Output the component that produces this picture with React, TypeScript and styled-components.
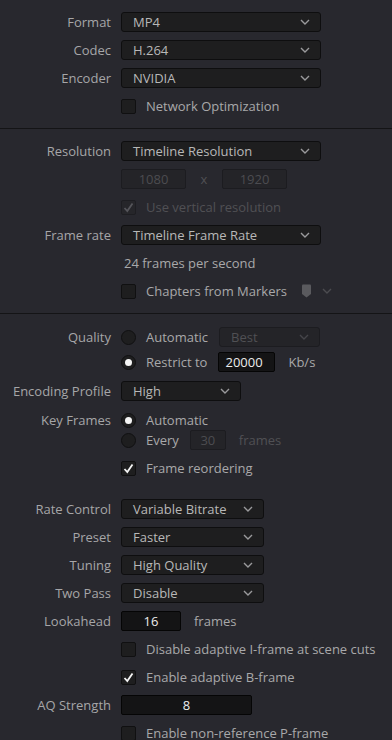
import React from 'react'
import styled, { createGlobalStyle } from 'styled-components'

const GlobalStyle = createGlobalStyle`
  html, body {
    margin: 0;
    padding: 0;
    background: #28282e;
  }
  body {
    font-family: 'Open Sans', 'DejaVu Sans', sans-serif;
    font-size: 13px;
    color: #b4b4b4;
  }
`

const Page = styled.div`
  width: 392px;
  height: 740px;
  overflow: hidden;
  background: #28282e;
`

const Section = styled.div<{ pt?: number; pb?: number }>`
  display: flex;
  flex-direction: column;
  padding-top: ${({ pt }) => pt ?? 12}px;
  padding-bottom: ${({ pb }) => pb ?? 12}px;
`

const Divider = styled.div`
  height: 1px;
  background: #141416;
`

const Row = styled.div<{ mt?: number }>`
  display: grid;
  grid-template-columns: 111px 1fr;
  column-gap: 10px;
  align-items: center;
  height: 20px;
  margin-top: ${({ mt }) => mt ?? 0}px;
`

const Label = styled.div`
  text-align: right;
  color: #a6a6a8;
  white-space: nowrap;
  margin-top: -1px;
`

const Controls = styled.div`
  display: flex;
  align-items: center;
  min-width: 0;
`

const Select = styled.div<{ w: number; disabled?: boolean }>`
  box-sizing: border-box;
  width: ${({ w }) => w}px;
  height: 20px;
  display: flex;
  align-items: center;
  justify-content: space-between;
  padding: 0 10px 0 11px;
  background: ${({ disabled }) => (disabled ? '#242428' : '#1e1e1f')};
  border: 1px solid ${({ disabled }) => (disabled ? '#1c1c20' : '#0e0e0f')};
  border-radius: 3px;
  color: ${({ disabled }) => (disabled ? '#505054' : '#b8b8b8')};
  white-space: nowrap;
`

const Chevron = ({ color = '#9a9a9c' }: { color?: string }) => (
  <svg width="10" height="6" viewBox="0 0 10 6">
    <path d="M1 1 L5 5 L9 1" fill="none" stroke={color} strokeWidth="1.4" />
  </svg>
)

const Field = styled.div<{ w: number; disabled?: boolean; align?: string }>`
  box-sizing: border-box;
  width: ${({ w }) => w}px;
  height: 20px;
  display: flex;
  align-items: center;
  justify-content: ${({ align }) => align || 'center'};
  padding: 0 6px;
  background: ${({ disabled }) => (disabled ? '#242428' : '#141415')};
  border: 1px solid ${({ disabled }) => (disabled ? '#1c1c20' : '#050505')};
  border-radius: 2px;
  color: ${({ disabled }) => (disabled ? '#4c4c50' : '#ececec')};
`

const Box = styled.div<{ disabled?: boolean }>`
  box-sizing: border-box;
  width: 15px;
  height: 15px;
  flex: none;
  display: flex;
  align-items: center;
  justify-content: center;
  background: ${({ disabled }) => (disabled ? '#26262a' : '#1e1e1f')};
  border: 1px solid ${({ disabled }) => (disabled ? '#1e1e22' : '#101011')};
  border-radius: 2px;
`

const Radio = styled.div<{ on?: boolean }>`
  box-sizing: border-box;
  width: 15px;
  height: 15px;
  flex: none;
  border-radius: 50%;
  background: #1e1e1f;
  border: 1px solid #101011;
  display: flex;
  align-items: center;
  justify-content: center;
  &::after {
    content: '';
    display: ${({ on }) => (on ? 'block' : 'none')};
    width: 7px;
    height: 7px;
    border-radius: 50%;
    background: #f4f4f4;
  }
`

const Text = styled.span<{ dim?: boolean; ml?: number }>`
  margin-left: ${({ ml }) => ml ?? 10}px;
  margin-top: -1px;
  color: ${({ dim }) => (dim ? '#505054' : '#a8a8aa')};
  white-space: nowrap;
`

const Check = ({ color }: { color: string }) => (
  <svg width="11" height="11" viewBox="0 0 11 11">
    <path d="M1.5 6 L4.3 9 L9.5 1.5" fill="none" stroke={color} strokeWidth="1.8" />
  </svg>
)

const CheckRow = ({ label, checked, disabled, mt, children }: {
  label: string; checked?: boolean; disabled?: boolean; mt?: number; children?: React.ReactNode
}) => (
  <Row mt={mt}>
    <span />
    <Controls>
      <Box disabled={disabled}>{checked && <Check color={disabled ? '#55555a' : '#f4f4f4'} />}</Box>
      <Text dim={disabled}>{label}</Text>
      {children}
    </Controls>
  </Row>
)

const SelectRow = ({ label, value, w, mt }: { label: string; value: string; w: number; mt?: number }) => (
  <Row mt={mt}>
    <Label>{label}</Label>
    <Controls>
      <Select w={w}>
        <span>{value}</span>
        <Chevron />
      </Select>
    </Controls>
  </Row>
)

const Marker = () => (
  <svg width="11" height="14" viewBox="0 0 11 14" style={{ marginLeft: 14 }}>
    <path d="M1 1.5 Q1 0.5 2 0.5 L9 0.5 Q10 0.5 10 1.5 L10 10 L5.5 13.5 L1 10 Z" fill="#5a5a5e" />
  </svg>
)

const Cross = styled.span`
  width: 36px;
  text-align: center;
  color: #505054;
`

const Spacer = styled.span<{ w: number }>`
  display: inline-block;
  width: ${({ w }) => w}px;
`

export default function App() {
  return (
    <Page>
      <GlobalStyle />
      <Section pt={12} pb={12}>
        <SelectRow label="Format" value="MP4" w={200} />
        <SelectRow label="Codec" value="H.264" w={200} mt={8} />
        <SelectRow label="Encoder" value="NVIDIA" w={200} mt={8} />
        <CheckRow label="Network Optimization" mt={8} />
      </Section>
      <Divider />
      <Section pt={12} pb={12}>
        <SelectRow label="Resolution" value="Timeline Resolution" w={200} />
        <Row mt={8}>
          <span />
          <Controls>
            <Field w={65} disabled>1080</Field>
            <Cross>x</Cross>
            <Field w={65} disabled>1920</Field>
          </Controls>
        </Row>
        <CheckRow label="Use vertical resolution" checked disabled mt={8} />
        <SelectRow label="Frame rate" value="Timeline Frame Rate" w={200} mt={8} />
        <Row mt={8}>
          <span />
          <Controls>
            <Text ml={3}>24 frames per second</Text>
          </Controls>
        </Row>
        <CheckRow label="Chapters from Markers" mt={8}>
          <Marker />
          <Spacer w={10} />
          <Chevron color="#4c4c50" />
        </CheckRow>
      </Section>
      <Divider />
      <Section pt={13} pb={0}>
        <Row>
          <Label>Quality</Label>
          <Controls>
            <Radio />
            <Text>Automatic</Text>
            <Spacer w={11} />
            <Select w={101} disabled>
              <span>Best</span>
              <Chevron color="#45454a" />
            </Select>
          </Controls>
        </Row>
        <Row mt={5}>
          <span />
          <Controls>
            <Radio on />
            <Text>Restrict to</Text>
            <Spacer w={11} />
            <Field w={57} align="flex-start">20000</Field>
            <Text ml={13}>Kb/s</Text>
          </Controls>
        </Row>
        <SelectRow label="Encoding Profile" value="High" w={120} mt={9} />
        <Row mt={9}>
          <Label>Key Frames</Label>
          <Controls>
            <Radio on />
            <Text>Automatic</Text>
          </Controls>
        </Row>
        <Row>
          <span />
          <Controls>
            <Radio />
            <Text>Every</Text>
            <Spacer w={11} />
            <Field w={36} disabled>30</Field>
            <Text dim ml={13}>frames</Text>
          </Controls>
        </Row>
        <CheckRow label="Frame reordering" checked mt={8} />
        <SelectRow label="Rate Control" value="Variable Bitrate" w={143} mt={21} />
        <SelectRow label="Preset" value="Faster" w={143} mt={8} />
        <SelectRow label="Tuning" value="High Quality" w={143} mt={8} />
        <SelectRow label="Two Pass" value="Disable" w={143} mt={8} />
        <Row mt={8}>
          <Label>Lookahead</Label>
          <Controls>
            <Field w={60}>16</Field>
            <Text ml={13}>frames</Text>
          </Controls>
        </Row>
        <CheckRow label="Disable adaptive I-frame at scene cuts" mt={8} />
        <CheckRow label="Enable adaptive B-frame" checked mt={8} />
        <Row mt={8}>
          <Label>AQ Strength</Label>
          <Controls>
            <Field w={131}>8</Field>
          </Controls>
        </Row>
        <CheckRow label="Enable non-reference P-frame" mt={8} />
      </Section>
    </Page>
  )
}
